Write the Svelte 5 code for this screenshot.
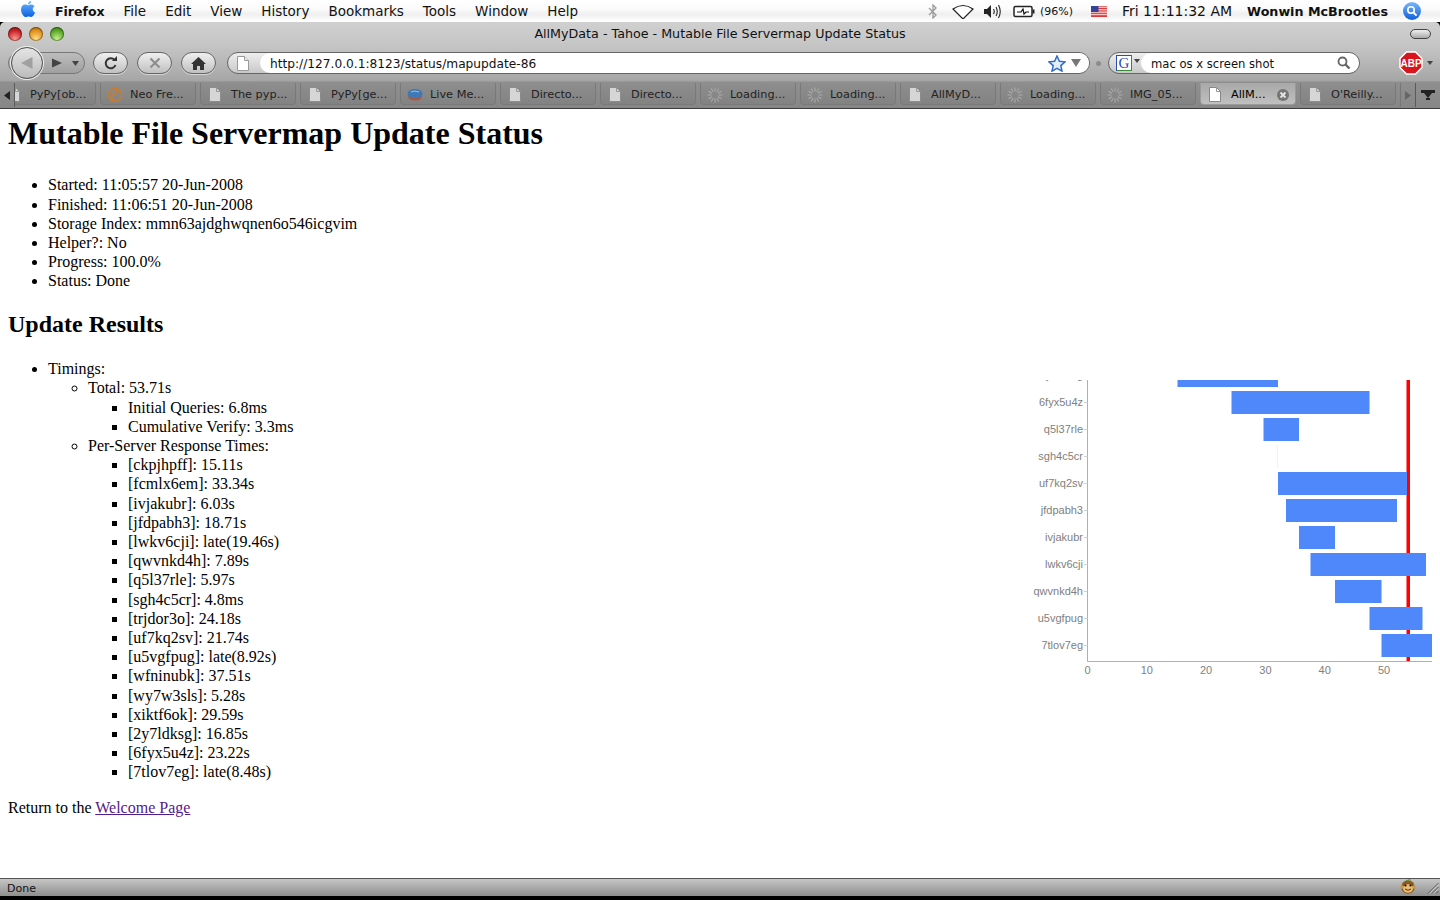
<script>
  const menus = ['File','Edit','View','History','Bookmarks','Tools','Window','Help'];
  const tabs = [
    {t:'PyPy[ob...',i:'doc',first:true},{t:'Neo Fre...',i:'neo'},{t:'The pyp...',i:'doc'},{t:'PyPy[ge...',i:'doc'},
    {t:'Live Me...',i:'live'},{t:'Directo...',i:'doc'},{t:'Directo...',i:'doc'},{t:'Loading...',i:'spin'},
    {t:'Loading...',i:'spin'},{t:'AllMyD...',i:'doc'},{t:'Loading...',i:'spin'},{t:'IMG_05...',i:'spin'},
    {t:'AllM...',i:'doc',active:true},{t:"O'Reilly...",i:'doc'}
  ];
  const spokes = [0,30,60,90,120,150,180,210,240,270,300,330];
  const status = ['Started: 11:05:57 20-Jun-2008','Finished: 11:06:51 20-Jun-2008','Storage Index: mmn63ajdghwqnen6o546icgvim','Helper?: No','Progress: 100.0%','Status: Done'];
  const servers = ['[ckpjhpff]: 15.11s','[fcmlx6em]: 33.34s','[ivjakubr]: 6.03s','[jfdpabh3]: 18.71s','[lwkv6cji]: late(19.46s)','[qwvnkd4h]: 7.89s','[q5l37rle]: 5.97s','[sgh4c5cr]: 4.8ms','[trjdor3o]: 24.18s','[uf7kq2sv]: 21.74s','[u5vgfpug]: late(8.92s)','[wfninubk]: 37.51s','[wy7w3sls]: 5.28s','[xiktf6ok]: 29.59s','[2y7ldksg]: 16.85s','[6fyx5u4z]: 23.22s','[7tlov7eg]: late(8.48s)'];
  const X0 = 1087.5, L = 1020, T = 380;
  const rows = [
    {n:'6fyx5u4z',a:1231.5,b:1369.5,y:391},{n:'q5l37rle',a:1263.5,b:1299,y:418},{n:'sgh4c5cr',a:1277,b:1278,y:445,thin:true},
    {n:'uf7kq2sv',a:1278,b:1407,y:472},{n:'jfdpabh3',a:1286,b:1397,y:499},{n:'ivjakubr',a:1299,b:1335,y:526},
    {n:'lwkv6cji',a:1310.5,b:1426,y:553},{n:'qwvnkd4h',a:1335,b:1381.5,y:580},{n:'u5vgfpug',a:1369.5,b:1422.5,y:607},{n:'7tlov7eg',a:1381.5,b:1432,y:634}
  ];
  const ticks = [0,10,20,30,40,50];
</script>

<div class="screen">
  <header class="menubar">
    <svg class="apple" viewBox="0 0 16 19" width="16" height="19" aria-hidden="true">
      <defs><linearGradient id="ap" x1="0" y1="0" x2="0" y2="1"><stop offset="0" stop-color="#6db4ff"/><stop offset="1" stop-color="#0a62e0"/></linearGradient></defs>
      <path fill="url(#ap)" d="M11.2 1c0 1.8-1.4 3.400-3.200 3.400C8 2.600 9.500 1.100 11.200 1zM8 5.300c.8 0 1.800-.8 3.200-.8 1.300 0 2.600.7 3.300 1.800-2.600 1.500-2.200 5.100.6 6.200-.7 1.900-2.300 4.500-3.800 4.500-1 0-1.500-.6-2.700-.6s-1.800.6-2.700.6C3.900 17 1 13.200 1 9.700 1 6.500 3 4.600 5 4.600c1.300 0 2.300.7 3 .7z"/>
    </svg>
    <strong class="appname">Firefox</strong>
    <nav class="menus">{#each menus as m}<span>{m}</span>{/each}</nav>
    <div class="extras">
      <svg class="bt" width="10" height="15" viewBox="0 0 10 15" aria-hidden="true"><path d="M1 4l7 7-3 3V1l3 3-7 7" fill="none" stroke="#9a9a9a" stroke-width="1.300"/></svg>
      <svg class="wifi" width="22" height="15" viewBox="0 0 22 15" aria-hidden="true"><path d="M1 5Q11-2 21 5L11 15z" fill="#fff" stroke="#222" stroke-width="1.200"/></svg>
      <svg class="vol" width="19" height="15" viewBox="0 0 19 15" aria-hidden="true"><path d="M1 5h3l4-4v13l-4-4H1z" fill="#222"/><path d="M10.500 5q1.500 2.500 0 5M13 3q2.500 4.500 0 9M15.500 1q3.500 6.500 0 13" fill="none" stroke="#222" stroke-width="1.100"/></svg>
      <svg class="batt" width="22" height="13" viewBox="0 0 22 13" aria-hidden="true"><rect x="1" y="1.500" width="18" height="10" rx="1.500" fill="#fff" stroke="#222" stroke-width="1.500"/><rect x="19.500" y="4.500" width="2" height="4" fill="#222"/><path d="M4 7h4l2-3 1 5 2-2h3" fill="none" stroke="#111" stroke-width="1.200"/></svg>
      <span class="pct">(96%)</span>
      <svg class="flag" width="16" height="11" viewBox="0 0 16 11" aria-hidden="true"><rect width="16" height="11" fill="#fff"/><path d="M0 .8h16M0 2.500h16M0 4.200h16M0 5.900h16M0 7.600h16M0 9.300h16" stroke="#d22" stroke-width=".9"/><path d="M0 10.400h16" stroke="#d22" stroke-width="1"/><rect width="7.500" height="6" fill="#33449a"/></svg>
      <span class="clock">Fri 11:11:32 AM</span>
      <strong class="user">Wonwin McBrootles</strong>
      <svg class="spot" width="18" height="18" viewBox="0 0 18 18" aria-hidden="true"><defs><linearGradient id="sp" x1="0" y1="0" x2="0" y2="1"><stop offset="0" stop-color="#7ab8f8"/><stop offset="1" stop-color="#0e5fdc"/></linearGradient></defs><circle cx="9" cy="9" r="9" fill="url(#sp)"/><circle cx="8" cy="8" r="3.200" fill="none" stroke="#fff" stroke-width="1.600"/><path d="M10.400 10.400l3.200 3.200" stroke="#fff" stroke-width="2"/></svg>
    </div>
  </header>

  <section class="chrome">
    <div class="titlebar">
      <div class="lights"><i class="light red"></i><i class="light amber"></i><i class="light green"></i></div>
      <div class="title">AllMyData - Tahoe - Mutable File Servermap Update Status</div>
      <i class="pill"></i>
    </div>

    <div class="navrow">
      <div class="backfwd">
        <button class="round back" aria-label="Back"><svg width="14" height="14" viewBox="0 0 14 14"><path d="M12.500 1v12L1 7z" fill="#a0a0a0"/></svg></button>
        <svg class="fwd" width="10" height="10" viewBox="0 0 10 10" aria-hidden="true"><path d="M0 .5v9L10 5z" fill="#444"/></svg>
        <svg class="drop" width="7" height="5" viewBox="0 0 7 5" aria-hidden="true"><path d="M0 0h7L3.500 5z" fill="#444"/></svg>
      </div>
      <button class="tool" aria-label="Reload"><svg width="14" height="14" viewBox="0 0 14 14"><path d="M11.500 9a5 5 0 1 1-1-5" fill="none" stroke="#333" stroke-width="2"/><path d="M8 5h5V0z" fill="#333"/></svg></button>
      <button class="tool" aria-label="Stop"><svg width="12" height="12" viewBox="0 0 12 12"><path d="M1.500 1.500l9 9M10.500 1.500l-9 9" stroke="#8e8e8e" stroke-width="2.200"/></svg></button>
      <button class="tool" aria-label="Home"><svg width="15" height="13" viewBox="0 0 15 13"><path d="M7.500 0L15 7h-2v6H9V9H6v4H2V7H0z" fill="#333"/></svg></button>

      <div class="urlbar">
        <span class="urlicon">
          <svg width="12" height="15" viewBox="0 0 12 15" aria-hidden="true"><path d="M.5.500h7l4 4v10H.500z" fill="#fff" stroke="#999"/><path d="M7.500.500v4h4" fill="#eee" stroke="#999"/></svg>
        </span>
        <div class="urlfield">
          <span class="urltext">http://127.0.0.1:8123/status/mapupdate-86</span>
          <svg class="star" width="18" height="17" viewBox="0 0 18 17" aria-hidden="true"><path d="M9 1l2.400 5.200 5.600.6-4.200 3.800 1.200 5.500L9 13.300l-5 2.800 1.200-5.500L1 6.800l5.600-.6z" fill="#e4eefb" stroke="#2f6cc8" stroke-width="1.500"/></svg>
          <svg class="urldrop" width="10" height="8" viewBox="0 0 10 8" aria-hidden="true"><path d="M0 0h10L5 8z" fill="#777"/></svg>
        </div>
      </div>

      <i class="grip"></i>

      <div class="search">
        <span class="engine">
          <span class="gbox">G</span>
          <svg width="6" height="4" viewBox="0 0 6 4" aria-hidden="true"><path d="M0 0h6L3 4z" fill="#444"/></svg>
        </span>
        <div class="searchfield">
          <span class="searchtext">mac os x screen shot</span>
          <svg width="14" height="14" viewBox="0 0 14 14" aria-hidden="true"><circle cx="5.500" cy="5.500" r="4" fill="#fff" stroke="#666" stroke-width="1.800"/><path d="M8.500 8.500l4 4" stroke="#666" stroke-width="2.400"/></svg>
        </div>
      </div>

      <div class="abp">
        <svg width="24" height="24" viewBox="0 0 24 24" aria-hidden="true"><path d="M7.500 1h9L23 7.500v9L16.500 23h-9L1 16.500v-9z" fill="#d8141c" stroke="#fff" stroke-width="1.500"/><text x="12" y="16" text-anchor="middle" class="abptext">ABP</text></svg>
        <svg width="6" height="4" viewBox="0 0 6 4" aria-hidden="true"><path d="M0 0h6L3 4z" fill="#444"/></svg>
      </div>
    </div>

    <div class="tabrow">
      <span class="tabscroll left"><svg width="6" height="9" viewBox="0 0 6 9" aria-hidden="true"><path d="M6 0v9L0 4.500z" fill="#222"/></svg></span>
      <div class="tabs">
        {#each tabs as tab}
          <div class="tab" class:active={tab.active} class:first={tab.first}>
            {#if tab.i === 'doc'}
              <svg class="ticon docicon" width="12" height="15" viewBox="0 0 12 15" aria-hidden="true"><path d="M.5.500h7l4 4v10H.500z" fill={tab.active ? '#fff' : '#d6d6d6'} stroke={tab.active ? '#888' : '#8c8c8c'}/><path d="M7.500.500v4h4" fill="none" stroke="#999"/></svg>
            {:else if tab.i === 'spin'}
              <svg class="ticon wide" width="16" height="16" viewBox="0 0 16 16" aria-hidden="true">
                {#each spokes as a}<path d="M8 .5v4" stroke="#ababab" stroke-width="1" transform="rotate({a} 8 8)"/>{/each}
              </svg>
            {:else if tab.i === 'neo'}
              <svg class="ticon wide" width="16" height="16" viewBox="0 0 16 16" aria-hidden="true"><circle cx="8" cy="8" r="6.500" fill="none" stroke="#c97c2c" stroke-width="1.600"/><path d="M8 2c4 3 1 5-2 6s-1 5 3 6M5 6l3 2" fill="none" stroke="#c97c2c" stroke-width="1.400"/></svg>
            {:else}
              <svg class="ticon wide" width="16" height="14" viewBox="0 0 16 14" aria-hidden="true"><ellipse cx="8" cy="6" rx="7.500" ry="5" fill="#3f78b4"/><path d="M1 8q7 5 14 0l-1 3q-6 3-12 0z" fill="#b0553c"/><path d="M4 4q4-2 8 0" stroke="#9cc3e6" fill="none"/></svg>
            {/if}
            <span class="tlabel">{tab.t}</span>
            {#if tab.active}
              <svg class="tclose" width="12" height="12" viewBox="0 0 12 12" aria-hidden="true"><circle cx="6" cy="6" r="6" fill="#757575"/><path d="M3.500 3.500l5 5M8.500 3.500l-5 5" stroke="#e6e6e6" stroke-width="1.800"/></svg>
            {/if}
          </div>
        {/each}
      </div>
      <span class="tabscroll right"><svg width="6" height="9" viewBox="0 0 6 9" aria-hidden="true"><path d="M0 0v9l6-4.500z" fill="#666"/></svg></span>
      <span class="tabmenu"><svg width="14" height="10" viewBox="0 0 14 10" aria-hidden="true"><rect width="14" height="3" fill="#222"/><path d="M3 3h8L7 8z" fill="#222"/><rect x="5" y="8" width="4" height="2" fill="#222"/></svg></span>
    </div>
  </section>

  <main class="page">
    <h1>Mutable File Servermap Update Status</h1>
    <ul class="top">
      {#each status as s}<li>{s}</li>{/each}
    </ul>
    <h2>Update Results</h2>

    <div class="results">
      <ul class="timings">
        <li>Timings:
          <ul>
            <li>Total: 53.71s
              <ul>
                <li>Initial Queries: 6.8ms</li>
                <li>Cumulative Verify: 3.3ms</li>
              </ul>
            </li>
            <li>Per-Server Response Times:
              <ul>
                {#each servers as s}<li>{s}</li>{/each}
              </ul>
            </li>
          </ul>
        </li>
      </ul>

      <svg class="chart" width="420" height="300" viewBox="{L} {T} 420 300" role="img" aria-label="Per-server response timeline">
        <path d="M{X0} {T}V661.500H1432" fill="none" stroke="#b0b0b0"/>
        <rect x="1406.500" y={T} width="3.500" height="281" fill="#ff0000"/>
        <rect x="1177.500" y={T} width="100.500" height="7" fill="#4e88fb"/>
        <text x="1083" y="378.500" text-anchor="end" class="lab">2y7ldksg</text>
        {#each rows as r}
          <path d="M1084 {r.y + 11.500}H{X0}" stroke="#d0d0d0"/>
          <text x="1083" y={r.y + 14.500} text-anchor="end" class="lab">{r.n}</text>
          <rect x={r.a} y={r.y} width={r.b - r.a} height="23" fill={r.thin ? '#f3f3f6' : '#4e88fb'}/>
        {/each}
        {#each ticks as t}
          <text x={X0 + t * 5.93} y="674" text-anchor="middle" class="lab">{t}</text>
        {/each}
      </svg>
    </div>

    <p class="back-link">Return to the <a href="#welcome">Welcome Page</a></p>
  </main>

  <footer class="statusbar">
    <span class="donetext">Done</span>
    <div class="statusright">
      <svg class="monkey" width="16" height="15" viewBox="0 0 16 15" aria-hidden="true"><circle cx="8" cy="8" r="6.800" fill="#8a5a20"/><circle cx="2" cy="8" r="1.800" fill="#c79a52"/><circle cx="14" cy="8" r="1.800" fill="#c79a52"/><ellipse cx="8" cy="9.500" rx="5" ry="4.300" fill="#e8bc72"/><circle cx="5.500" cy="6.500" r="1.100" fill="#111"/><circle cx="10.500" cy="6.500" r="1.100" fill="#111"/><path d="M5 10q3 2.500 6 0" stroke="#5a3010" fill="none"/><path d="M6 2q3-2 5-1" stroke="#5a9a30" fill="none"/></svg>
      <svg class="resize" width="12" height="12" viewBox="0 0 12 12" aria-hidden="true"><path d="M11.500 1L1 11.500M11.500 5L5 11.500M11.500 9L9 11.500" stroke="#5a5a5a"/><path d="M11.500 2.500L2.500 11.500M11.500 6.500L6.500 11.500" stroke="#ddd" stroke-width=".7"/></svg>
    </div>
  </footer>
</div>

<style>
  :global(body) { margin: 0; background: #000; }
  :global(html), :global(body) { overflow: hidden; }

  .screen {
    width: 1440px;
    height: 900px;
    display: flex;
    flex-direction: column;
    overflow: hidden;
    background: #000;
    font-family: "DejaVu Sans", sans-serif;
  }
  i { display: block; }
  button { padding: 0; font: inherit; cursor: default; }
  svg { display: block; flex: none; }

  /* Menu bar */
  .menubar {
    flex: none;
    height: 22px;
    display: flex;
    align-items: center;
    padding-left: 20px;
    box-sizing: border-box;
    color: #111;
    background: linear-gradient(#ffffff 0, #fbfbfb 40%, #efefef 65%, #fbfbfb 90%, #ffffff 100%);
  }
  .apple { margin-bottom: 3px; }
  .appname { margin-left: 19px; font-size: 12.500px; }
  .menus { display: flex; gap: 19px; margin-left: 19px; font-size: 13.500px; }
  .extras { margin-left: auto; display: flex; align-items: center; padding-right: 20px; }
  .bt { margin-right: 14px; }
  .wifi { margin-right: 9px; }
  .vol { margin-right: 11px; }
  .batt { margin-right: 5px; }
  .pct { font-size: 11px; margin-right: 18px; }
  .flag { margin-right: 15px; }
  .clock { font-size: 14px; margin-right: 15px; }
  .user { font-size: 12.700px; margin-right: 15px; }
  .spot { margin-right: -1px; }

  /* Window chrome */
  .chrome {
    flex: none;
    height: 87px;
    display: flex;
    flex-direction: column;
    border-radius: 5px 5px 0 0;
    background: linear-gradient(#d0d0d0 0, #c6c6c6 25%, #bcbcbc 40%, #a6a6a6 68%, #8f8f8f 70%, #868686 100%);
    border-bottom: 1px solid #3c3c3c;
    box-sizing: border-box;
  }
  .titlebar {
    flex: none;
    height: 22px;
    display: flex;
    align-items: center;
    position: relative;
    padding: 0 8px;
  }
  .lights { display: flex; gap: 7px; margin-top: 2px; }
  .light { width: 14px; height: 14px; border-radius: 50%; box-shadow: inset 0 0 0 1px rgba(0,0,0,.35); }
  .red { background: radial-gradient(circle at 50% 85%, #ff9a90, #c8232a 60%, #7c1016); }
  .amber { background: radial-gradient(circle at 50% 85%, #ffdf85, #e0901c 60%, #94570a); }
  .green { background: radial-gradient(circle at 50% 85%, #c8f090, #5aa828 60%, #2e6c10); }
  .title {
    position: absolute;
    left: 0;
    right: 0;
    top: 4px;
    text-align: center;
    font-size: 12.700px;
    color: #111;
  }
  .pill {
    margin-left: auto;
    margin-right: 1px;
    width: 19px;
    height: 8px;
    border-radius: 5px;
    border: 1px solid #444;
    background: linear-gradient(#f0f0f0, #aaa);
    margin-top: 1px;
  }

  .navrow {
    flex: none;
    height: 39px;
    box-sizing: border-box;
    padding: 8px 0 0 8px;
    display: flex;
    align-items: flex-start;
  }
  .backfwd {
    width: 77px;
    height: 22px;
    box-sizing: border-box;
    border-radius: 11px;
    border: 1px solid #777;
    background: linear-gradient(#bdbdbd, #a0a0a0);
    display: flex;
    align-items: center;
    position: relative;
    flex: none;
  }
  .round {
    position: absolute;
    left: 2px;
    top: -6px;
    width: 32px;
    height: 32px;
    border-radius: 50%;
    border: 1px solid #555;
    background: linear-gradient(#e4e4e4, #bbb);
    box-shadow: 0 0 0 1px #eee;
    display: flex;
    align-items: center;
    justify-content: center;
  }
  .fwd { margin-left: 43px; }
  .drop { margin-left: 10px; }
  .tool {
    flex: none;
    width: 35px;
    height: 22px;
    margin-left: 9px;
    box-sizing: border-box;
    border-radius: 11px;
    border: 1px solid #666;
    background: linear-gradient(#f0f0f0, #c0c0c0);
    box-shadow: 0 1px 0 rgba(255,255,255,.5);
    display: flex;
    align-items: center;
    justify-content: center;
  }
  .backfwd + .tool { margin-left: 8px; }
  .urlbar {
    flex: none;
    margin-left: 11px;
    width: 863px;
    height: 22px;
    box-sizing: border-box;
    border-radius: 11px;
    border: 1px solid #666;
    background: linear-gradient(#eee, #c8c8c8);
    display: flex;
    align-items: center;
    overflow: hidden;
  }
  .urlicon { width: 32px; padding-left: 9px; box-sizing: border-box; flex: none; }
  .urlfield {
    flex: 1;
    height: 100%;
    background: #fff;
    border-radius: 11px 0 0 11px;
    display: flex;
    align-items: center;
    padding-left: 10px;
    font-size: 12.200px;
    color: #111;
  }
  .urltext { flex: 1; padding-top: 1px; }
  .star { margin-right: 5px; }
  .urldrop { margin-right: 8px; }
  .grip { flex: none; width: 5px; height: 5px; border-radius: 50%; background: #8c8c8c; margin: 9px 7px 0 6px; }
  .search {
    flex: none;
    width: 252px;
    height: 22px;
    box-sizing: border-box;
    border-radius: 11px;
    border: 1px solid #666;
    background: linear-gradient(#eee, #c8c8c8);
    display: flex;
    align-items: center;
    overflow: hidden;
  }
  .engine { flex: none; width: 32px; display: flex; align-items: center; gap: 2px; padding-left: 7px; box-sizing: border-box; }
  .gbox {
    width: 16px;
    height: 16px;
    box-sizing: border-box;
    background: #fff;
    border: 1px solid #3a8a3a;
    border-left-color: #2a4ac0;
    border-top-color: #2a4ac0;
    color: #2a4ac0;
    font: 15px/14px "Liberation Serif", serif;
    text-align: center;
    flex: none;
  }
  .engine svg { margin-bottom: 5px; }
  .searchfield {
    flex: 1;
    height: 100%;
    background: #fff;
    border-radius: 11px;
    display: flex;
    align-items: center;
    justify-content: space-between;
    padding: 0 8px 0 10px;
    font-size: 11.600px;
    color: #111;
  }
  .searchtext { padding-top: 1px; }
  .abp { flex: none; margin-left: 39px; display: flex; align-items: center; gap: 4px; margin-top: -1px; }
  .abptext { font: bold 10px "Liberation Sans", sans-serif; fill: #fff; }

  .tabrow {
    flex: 1;
    display: flex;
    align-items: flex-start;
    min-height: 0;
  }
  .tabscroll { flex: none; height: 24px; display: flex; align-items: center; justify-content: center; }
  .tabscroll.left { width: 15px; border-right: 1px solid #5a5a5a; box-sizing: border-box; }
  .tabscroll.right { width: 16px; margin-left: 4px; border-right: 1px solid #5a5a5a; border-left: 1px solid #777; box-sizing: border-box; }
  .tabmenu { flex: none; width: 24px; height: 24px; display: flex; align-items: center; justify-content: center; }
  .tabs { display: flex; gap: 4px; flex: none; }
  .tab {
    flex: none;
    width: 96px;
    height: 22px;
    box-sizing: border-box;
    display: flex;
    align-items: center;
    padding: 2px 0 0 8px;
    border: 1px solid #797979;
    border-top: none;
    border-radius: 0 0 4px 4px;
    background: linear-gradient(#8e8e8e, #828282);
    font-size: 11.300px;
    color: #222;
    overflow: hidden;
  }
  .tab.first { width: 81px; padding-left: 0; border-left: none; border-radius: 0 0 4px 0; }
  .tab.first .ticon { margin-left: -7px; }
  .tab.active { background: linear-gradient(#a8a8a8, #c0c0c0); color: #000; border-color: #9a9a9a; }
  .ticon { margin-right: 10px; }
  .ticon.wide { margin-left: -2px; margin-right: 7px; }
  .tlabel { flex: 1; white-space: nowrap; }
  .tclose { margin-right: 6px; }

  /* Page */
  .page {
    flex: none;
    height: 769px;
    background: #fff;
    overflow: hidden;
    padding: 6px 8px 0;
    box-sizing: border-box;
    color: #000;
    font: 16px/19.200px "Liberation Serif", "Times New Roman", serif;
  }
  h1 { font-size: 32px; line-height: 37px; margin: 0 0 23.300px; }
  h2 { font-size: 24px; line-height: 28px; margin: 19.700px 0 21px; }
  ul { margin: 0; padding-left: 40px; }
  ul ul ul { list-style-type: square; }
  .results { display: flex; justify-content: space-between; align-items: flex-start; }
  .results .timings { flex: 1; }
  .chart { margin-right: -8px; margin-top: 21px; }
  .lab { font: 11px "Liberation Sans", Arial, sans-serif; fill: #808080; }
  .back-link { margin: 16px 0 0; }
  a { color: #551a8b; }

  /* Status bar */
  .statusbar {
    flex: none;
    height: 18px;
    box-sizing: border-box;
    display: flex;
    align-items: center;
    justify-content: space-between;
    padding-left: 7px;
    border-top: 1px solid #555;
    background: linear-gradient(#c6c6c6, #8e8e8e);
    font-size: 11px;
    color: #111;
  }
  .donetext { padding-top: 1px; }
  .statusright { display: flex; align-items: center; gap: 11px; padding-right: 1px; }
  .monkey { margin-top: -2px; }
</style>
